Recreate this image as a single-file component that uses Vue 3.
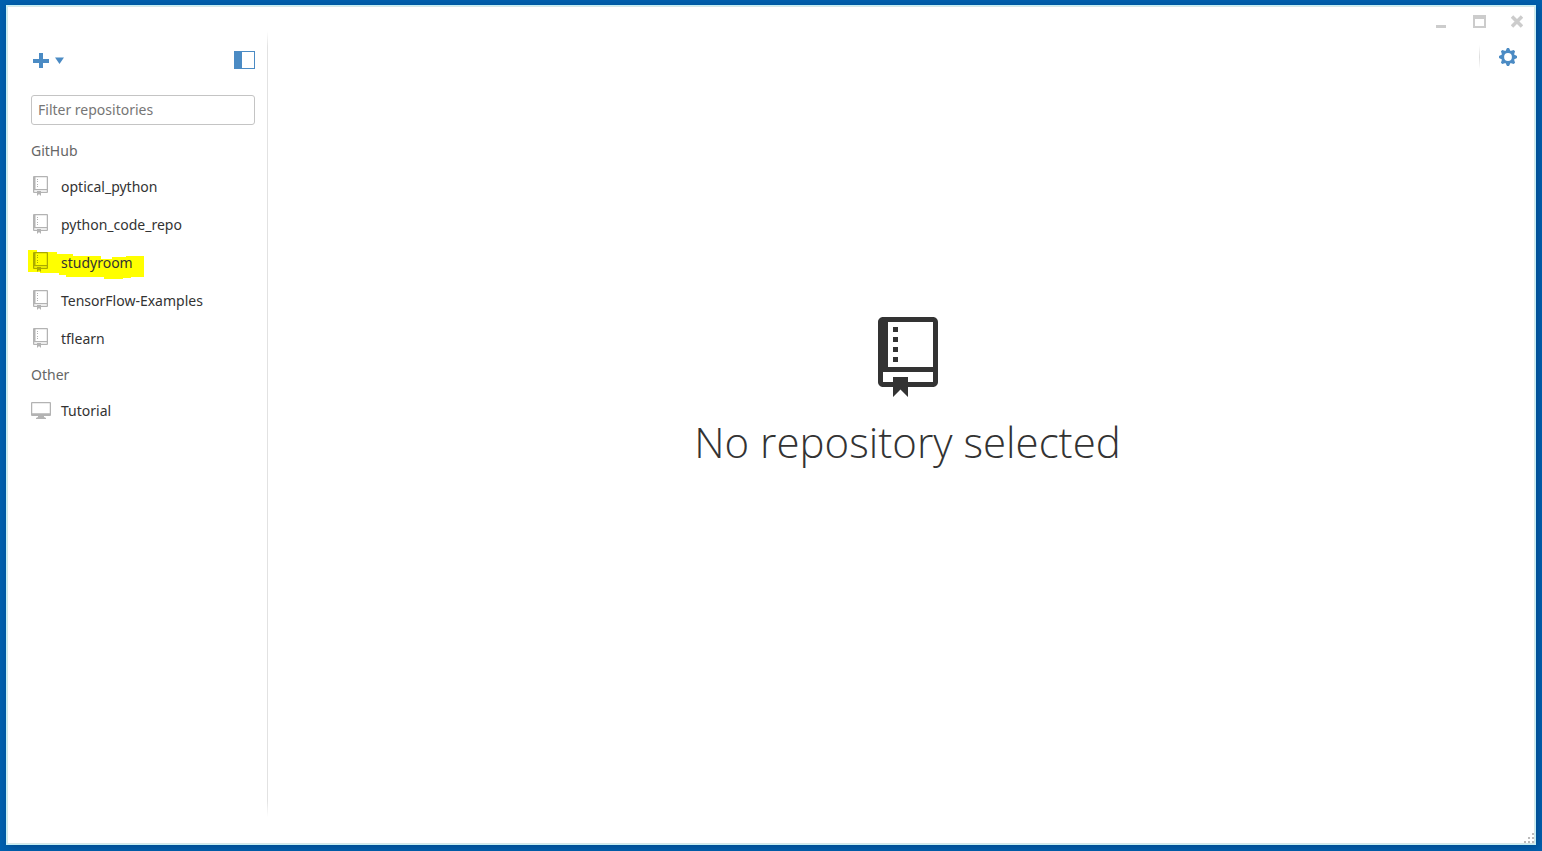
<script setup>
import { ref } from 'vue'

const filter = ref('')
const groups = [
  {
    name: 'GitHub',
    items: [
      { name: 'optical_python', icon: 'repo' },
      { name: 'python_code_repo', icon: 'repo' },
      { name: 'studyroom', icon: 'repo', marked: true },
      { name: 'TensorFlow-Examples', icon: 'repo' },
      { name: 'tflearn', icon: 'repo' },
    ],
  },
  { name: 'Other', items: [{ name: 'Tutorial', icon: 'desktop' }] },
]
const bookPath =
  'M4 9H3V8h1v1zm0-3H3v1h1V6zm0-2H3v1h1V4zm0-2H3v1h1V2zm8-1v12c0 .55-.45 1-1 1H6v2l-1.5-1.5L3 16v-2H1c-.55 0-1-.45-1-1V1c0-.55.45-1 1-1h10c.55 0 1 .45 1 1zm-1 10H1v2h2v-1h3v1h5v-2zm0-10H2v9h9V1z'
</script>

<template>
  <div class="desktop">
    <div class="window">
      <aside class="sidebar">
        <div class="tools">
          <button class="plain add" type="button" aria-label="Add repository">
            <svg width="32" height="18" viewBox="0 0 32 18">
              <path d="M7 2h4v6h6v4h-6v5H7v-5H1V8h6z" fill="#4b8bc4" />
              <path d="M23 6.500h9l-4.500 6.500z" fill="#4b8bc4" />
            </svg>
          </button>
          <button class="plain" type="button" aria-label="Toggle sidebar">
            <svg width="21" height="18" viewBox="0 0 21 18">
              <rect x=".5" y=".5" width="20" height="17" fill="#fff" stroke="#4b8bc4" />
              <rect width="8" height="18" fill="#4b8bc4" />
            </svg>
          </button>
        </div>
        <input v-model="filter" class="filter" type="text" placeholder="Filter repositories" aria-label="Filter repositories" />
        <nav>
          <section v-for="g in groups" :key="g.name">
            <h2>{{ g.name }}</h2>
            <ul>
              <li v-for="r in g.items" :key="r.name">
                <svg v-if="r.marked" class="marker" width="116" height="30" viewBox="0 0 116 30">
                  <path d="M0 0h9v2h20v2h16v2h28v3h11v-2h14v-1h18v21h-13v1h-8v1H76v-2H38v-2h-7v-2H12v-1H0z" fill="#ff0" />
                </svg>
                <a href="#" class="repo">
                  <span class="icon">
                    <svg v-if="r.icon === 'repo'" :class="{ dark: r.marked }" width="16" height="20" viewBox="0 0 16 20">
                      <path d="M1 0h13q1 0 1 1v15q0 1-1 1H8v3l-2-2-2 2v-3H1q-1 0-1-1V1q0-1 1-1zm1.500 1.250v11.750h11.250V1.250zM1.250 14.250v1.500H4V15h4v.750h5.750v-1.500z" fill-rule="evenodd" />
                      <path d="M4 3h1v1H4zM4 5h1v1H4zM4 8h1v1H4zM4 10h1v1H4z" />
                    </svg>
                    <svg v-else width="20" height="17" viewBox="0 0 20 17">
                      <path d="M1 0h18q1 0 1 1v12q0 1-1 1h-6v1l2 1v1H5v-1l2-1v-1H1q-1 0-1-1V1q0-1 1-1zm.250 1.250v10h17.500v-10z" fill-rule="evenodd" />
                    </svg>
                  </span>
                  <span class="name">{{ r.name }}</span>
                </a>
              </li>
            </ul>
          </section>
        </nav>
      </aside>
      <div class="content">
        <header>
          <div class="controls">
            <button class="plain" type="button" aria-label="Minimize">
              <svg width="12" height="14" viewBox="0 0 12 14"><path d="M0 10h10v3H0z" fill="#ccc" /></svg>
            </button>
            <button class="plain" type="button" aria-label="Maximize">
              <svg width="13" height="14" viewBox="0 0 13 14"><path d="M0 0h13v13H0zm2 4v7h9V4z" fill="#ccc" fill-rule="evenodd" /></svg>
            </button>
            <button class="plain" type="button" aria-label="Close">
              <svg width="12" height="14" viewBox="0 0 12 14"><path d="M1 1.500l10 10M11 1.500l-10 10" stroke="#ccc" stroke-width="3.500" /></svg>
            </button>
          </div>
          <div class="settings">
            <span class="divider"></span>
            <button class="plain" type="button" aria-label="Settings">
              <svg width="18" height="18" viewBox="-9 -9 18 18">
                <g fill="#4b8bc4">
                  <path v-for="a in [0, 45, 90, 135]" :key="a" d="M-2.500-6L-1-9H1L2.500-6V6L1 9H-1L-2.500 6z" :transform="`rotate(${a})`" />
                  <circle r="6.500" />
                </g>
                <circle r="3.900" fill="#fff" />
              </svg>
            </button>
          </div>
        </header>
        <main>
          <svg width="60" height="80" viewBox="0 0 12 16"><path :d="bookPath" fill="#333" /></svg>
          <h1>No repository selected</h1>
        </main>
      </div>
      <svg class="grip" width="10" height="10" viewBox="0 0 10 10">
        <path d="M8 0h2v2H8zM4 4h2v2H4zM8 4h2v2H8zM0 8h2v2H0zM4 8h2v2H4zM8 8h2v2H8z" fill="#bbb" />
      </svg>
    </div>
  </div>
</template>

<style>
body {
  margin: 0;
}
</style>

<style scoped>
* {
  box-sizing: border-box;
}
.desktop {
  display: flex;
  min-height: 100vh;
  padding: 5px 6px 6px;
  background: #0060ae;
  font: 14px/20px "Noto Sans", "Open Sans", sans-serif;
  color: #333;
}
.window {
  position: relative;
  display: flex;
  flex: 1;
  border: 1px solid #c4f0f5;
  outline: 1px solid #d5e6e7;
  outline-offset: -2px;
  background: #fff;
  box-shadow: 2px 2px 8px rgba(0, 20, 60, 0.3);
}
svg {
  display: block;
}
.plain {
  padding: 0;
  border: 0;
  background: none;
}
.sidebar {
  position: relative;
  width: 261px;
  padding: 44px 13px 24px 24px;
}
.sidebar::after {
  content: "";
  position: absolute;
  top: 25px;
  right: 0;
  bottom: 27px;
  width: 1px;
  background: linear-gradient(transparent, #e2e2e2 16px, #e2e2e2 calc(100% - 16px), transparent);
}
.tools {
  display: flex;
  justify-content: space-between;
  align-items: center;
  height: 20px;
  margin-bottom: 25px;
}
.add {
  padding-left: 1px;
}
.filter {
  display: block;
  width: 100%;
  height: 30px;
  padding: 0 6px 2px;
  border: 1px solid #c4c4c4;
  border-radius: 3px;
  background: #fff;
  font: inherit;
  color: #333;
}
.filter::placeholder {
  color: #767676;
  opacity: 1;
}
nav {
  padding-top: 9px;
}
h2 {
  margin: 0;
  font-size: 14px;
  font-weight: 400;
  line-height: 34px;
  color: #666;
}
ul {
  margin: 0;
  padding: 0;
  list-style: none;
}
li {
  position: relative;
}
.marker {
  position: absolute;
  top: 6px;
  left: -3px;
}
.repo {
  position: relative;
  display: flex;
  align-items: center;
  height: 38px;
  color: #333;
  text-decoration: none;
}
.icon {
  display: flex;
  justify-content: center;
  width: 20px;
  margin-right: 10px;
  padding-bottom: 2px;
  fill: #b3b3b3;
}
.dark {
  fill: #aaaa00;
}
.content {
  display: flex;
  flex: 1;
  flex-direction: column;
}
header {
  display: flex;
  flex-direction: column;
  align-items: flex-end;
}
.controls {
  display: flex;
  gap: 25px;
  padding: 9px 12px 0 0;
}
.settings {
  display: flex;
  align-items: center;
  gap: 19px;
  padding: 16px 18px 0 0;
}
.divider {
  width: 1px;
  height: 24px;
  background: linear-gradient(transparent, #ddd, transparent);
}
main {
  display: flex;
  flex: 1;
  flex-direction: column;
  align-items: center;
  justify-content: center;
  padding: 0 0 124px 12px;
}
h1 {
  margin: 15px 0 0;
  font-family: "Open Sans", "Noto Sans", sans-serif;
  font-size: 42px;
  font-weight: 300;
  line-height: 60px;
}
.grip {
  position: absolute;
  right: 1px;
  bottom: 1px;
}
</style>
